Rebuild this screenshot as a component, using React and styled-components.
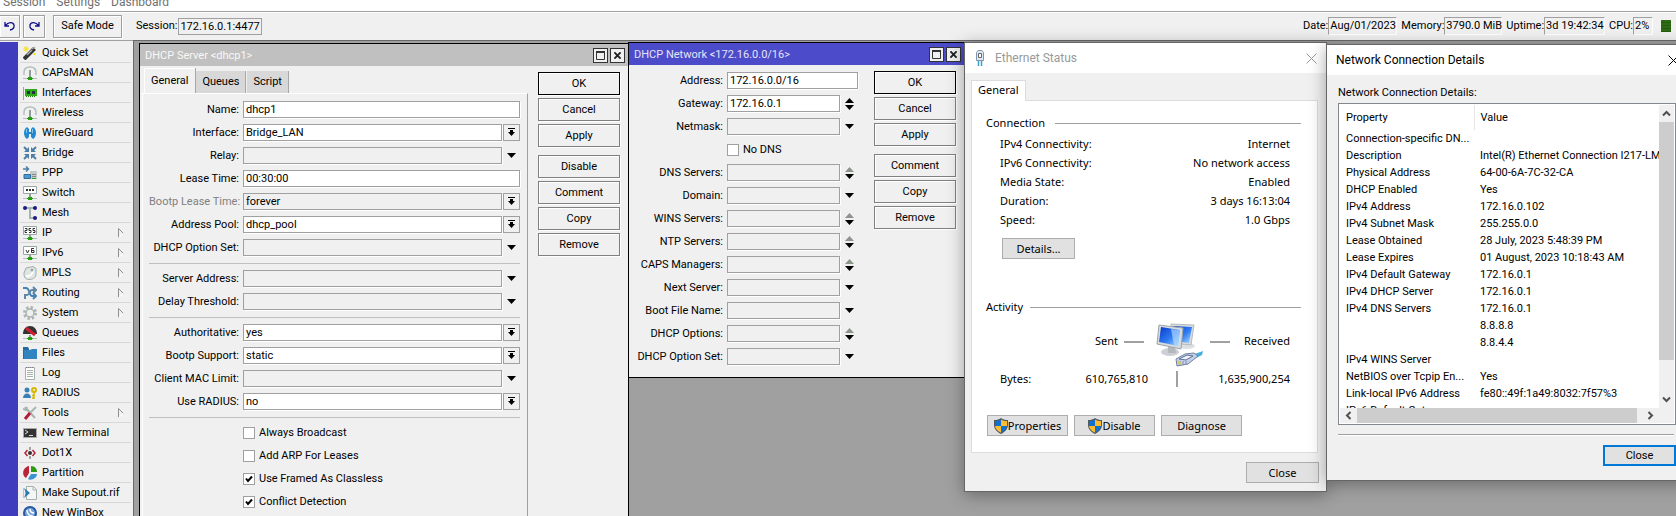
import React from 'react';
import styled, { createGlobalStyle, css } from 'styled-components';

const classic = "Roboto, 'Liberation Sans', sans-serif";
const system = "'Noto Sans', 'Open Sans', sans-serif";

const GlobalStyle = createGlobalStyle`
  * {
    box-sizing: border-box;
  }
  body {
    margin: 0;
    overflow: hidden;
  }
  button, input {
    font: inherit;
    color: inherit;
    margin: 0;
  }
`;

const Page = styled.div`
  position: relative;
  display: flex;
  flex-direction: column;
  height: 100vh;
  overflow: hidden;
  background: #f0f0f0;
  color: #000;
  font: 11px/16px ${classic};
`;

const MenuBar = styled.nav`
  display: flex;
  align-items: flex-end;
  gap: 11px;
  height: 11px;
  padding-left: 3px;
  overflow: hidden;
  background: #fff;
  font: 12px/18px ${classic};
`;

const MenuLink = styled.a`
  color: #707070;
  text-decoration: none;
`;

const Toolbar = styled.header`
  display: flex;
  align-items: center;
  height: 29px;
  flex-shrink: 0;
  border-top: 1px solid #a0a0a0;
  box-shadow: inset 0 1px #fff;
`;

const ToolButton = styled.button`
  display: flex;
  align-items: center;
  justify-content: center;
  width: ${(p) => (p.$wide ? '69px' : '22px')};
  height: 23px;
  margin-right: ${(p) => (p.$wide ? '14px' : '3px')};
  margin-left: ${(p) => (p.$wide ? '5px' : '0')};
  padding: 0;
  border: 1px solid #a0a0a0;
  background: #f0f0f0;
  box-shadow: 1px 1px #fff, inset 1px 1px #fff;

  &:first-child {
    width: 20px;
    border-left: 0;
  }
`;

const SessionField = styled.input`
  width: 84px;
  height: 17px;
  margin-left: 1px;
  padding: 0 1px;
  border: 1px solid #a0a0a0;
  background: #f0f0f0;
`;

const StatusList = styled.dl`
  display: flex;
  align-items: center;
  margin: 0 5px 0 auto;
`;

const StatusValue = styled.dd`
  margin: 0 4px 0 0;
  padding: 0 1px;
  width: ${(p) => p.$width}px;
  border: 1px solid #fff;
  border-top-color: #a0a0a0;
  border-left-color: #a0a0a0;
  white-space: nowrap;
`;

const CpuMeter = styled.span`
  width: 10px;
  height: 12px;
  margin-left: 4px;
  background: repeating-linear-gradient(#2f6b12 0 2px, #255a10 2px 3px);
`;

const Workspace = styled.div`
  display: flex;
  flex: 1;
  min-height: 0;
`;

const Sidebar = styled.aside`
  display: flex;
  width: 133px;
  flex-shrink: 0;
  border-top: 1px solid #a0a0a0;
  overflow: hidden;
`;

const Stripe = styled.div`
  width: 18px;
  margin-top: 1px;
  background: #403cbe;
`;

const SideMenu = styled.ul`
  flex: 1;
  margin: 2px 2px 0;
  padding: 0;
  list-style: none;
`;

const SideLink = styled.a`
  display: flex;
  align-items: center;
  gap: 5px;
  height: 20px;
  padding: 0 7px 0 3px;
  border-bottom: 1px solid #d8d8d8;
  color: inherit;
  text-decoration: none;

  span {
    flex: 1;
    white-space: nowrap;
  }
`;

const Desktop = styled.main`
  position: relative;
  flex: 1;
  overflow: hidden;
  border-top: 1px solid #696969;
  border-left: 1px solid #696969;
  background: #a0a0a0;
`;

const Window = styled.section`
  position: absolute;
  left: ${(p) => p.$x}px;
  top: ${(p) => p.$y}px;
  width: ${(p) => p.$width}px;
  min-height: ${(p) => p.$height || 0}px;
  border: 1px solid ${(p) => (p.$system ? '#666' : '#000')};
  background: #f0f0f0;
  ${(p) =>
    p.$system &&
    css`
      box-shadow: 0 3px 16px rgba(0, 0, 0, 0.35);
    `}
`;

const WindowTitle = styled.h2`
  flex: 1;
  margin: 0;
  font: inherit;
`;

const TitleBar = styled.div`
  display: flex;
  align-items: center;
  gap: 2px;
  height: 22px;
  padding: 0 3px 0 5px;
  background: ${(p) => (p.$active ? '#4c4cca' : '#c0c0c0')};
  color: ${(p) => (p.$active ? '#e4e4f8' : '#f8f8f8')};

  ${WindowTitle} {
    padding-top: 2px;
  }
`;

const TitleButton = styled.button`
  display: flex;
  align-items: center;
  justify-content: center;
  width: 15px;
  height: 15px;
  padding: 0;
  border: 1px solid #333;
  background: #f0f0f0;
`;

const WindowBody = styled.div`
  display: flex;
  align-items: flex-start;
  justify-content: space-between;
  padding: ${(p) => p.$padding};
`;

const TabbedForm = styled.div`
  width: 386px;
`;

const Tabs = styled.div`
  display: flex;
  align-items: flex-end;
  height: 25px;
  padding-left: 2px;
`;

const Tab = styled.button`
  height: ${(p) => (p.$selected ? 25 : 22)}px;
  padding: 0 ${(p) => (p.$selected ? 7 : 6)}px;
  margin-right: ${(p) => (p.$selected ? 0 : 1)}px;
  border: 0;
  border-right: 1px solid #a8a8a8;
  background: ${(p) => (p.$selected ? '#f0f0f0' : '#d8d8d8')};
  box-shadow: ${(p) => (p.$selected ? 'inset 1px 1px #fff' : 'none')};
`;

const Form = styled.form`
  display: flex;
  flex-direction: column;
  gap: 6px;
  width: ${(p) => (p.$width ? `${p.$width}px` : 'auto')};
  padding-top: 7px;
  ${(p) =>
    p.$panel &&
    css`
      min-height: 440px;
      padding: 7px 7px 0 6px;
      border-top: 1px solid #fff;
      border-left: 1px solid #fff;
      border-right: 1px solid #a0a0a0;
    `}
`;

const FieldRow = styled.div`
  display: flex;
  align-items: center;
  height: 17px;
`;

const FieldLabel = styled.label`
  width: ${(p) => p.$width}px;
  margin-right: 4px;
  text-align: right;
  white-space: nowrap;
  color: ${(p) => (p.$dim ? '#808080' : 'inherit')};
`;

const TextField = styled.input`
  flex: 1;
  min-width: 0;
  height: 17px;
  padding: 0 2px;
  border: 1px solid #a0a0a0;
  border-radius: 0;
  background: ${(p) => (p.$filled ? '#fff' : '#f0f0f0')};
  box-shadow: 1px 1px #fff;
`;

const FieldButton = styled.button`
  display: flex;
  align-items: center;
  justify-content: center;
  width: 17px;
  height: 17px;
  margin-left: 1px;
  padding: 0;
  border: ${(p) => (p.$framed ? '1px solid #a0a0a0' : '0')};
  background: none;
`;

const Separator = styled.hr`
  width: 100%;
  height: 2px;
  margin: 0;
  border: 0;
  border-bottom: 1px solid #c0c0c0;
`;

const CheckLabel = styled.label`
  display: flex;
  align-items: center;
  gap: 4px;
  height: 17px;
  margin-left: ${(p) => p.$indent}px;
`;

const Checkbox = styled.input`
  appearance: none;
  width: 12px;
  height: 12px;
  border: 1px solid #a0a0a0;
  background: #fff;

  &:checked {
    background: #fff
      url("data:image/svg+xml,%3Csvg xmlns='http://www.w3.org/2000/svg' viewBox='0 0 10 10'%3E%3Cpath d='M2 4.5 4 7 8 2.5' fill='none' stroke='%23000' stroke-width='2'/%3E%3C/svg%3E");
  }
`;

const Actions = styled.div`
  display: flex;
  flex-direction: column;
  gap: 3px;
  width: 82px;
  padding-top: ${(p) => p.$top}px;
`;

const ActionButton = styled.button`
  height: 23px;
  padding: 0;
  border: 1px solid ${(p) => (p.$primary ? '#000' : '#808080')};
  background: #f0f0f0;
  box-shadow: 1px 1px #fff, inset 1px 1px #fff;
  margin-top: ${(p) => (p.$group ? 5 : 0)}px;
`;

const SystemTitleBar = styled.div`
  display: flex;
  align-items: center;
  gap: 9px;
  height: 30px;
  padding: 0 9px;
  background: #fff;
  color: ${(p) => (p.$inactive ? '#999' : '#000')};
  font: 12px/16px ${classic};
`;

const CloseX = styled.button`
  display: flex;
  padding: 0;
  border: 0;
  background: none;
`;

const SystemBody = styled.div`
  display: flex;
  flex-direction: column;
  padding: 7px 7px 8px 6px;
  font: 11px/16px ${system};
`;

const SystemTab = styled.button`
  align-self: flex-start;
  position: relative;
  height: 21px;
  margin-bottom: -1px;
  padding: 0 6px 2px;
  border: 1px solid #dcdcdc;
  border-bottom: 0;
  background: #fff;
`;

const SystemPanel = styled.div`
  margin-right: 1px;
  padding: 14px 16px 16px 14px;
  border: 1px solid #dcdcdc;
  background: #fff;
`;

const GroupTitle = styled.h3`
  display: flex;
  align-items: center;
  gap: ${(p) => p.$gap}px;
  margin: 0;
  font: inherit;

  &::after {
    content: '';
    flex: 1;
    height: 1px;
    background: #a0a0a0;
  }
`;

const Stats = styled.dl`
  margin: 3px 11px 9px 14px;
`;

const Stat = styled.div`
  display: flex;
  justify-content: space-between;
  line-height: 19px;

  dd {
    margin: 0;
  }
`;

const SystemButton = styled.button`
  display: flex;
  align-items: center;
  justify-content: center;
  width: ${(p) => p.$width}px;
  height: 21px;
  padding: 0;
  border: ${(p) => (p.$focused ? '2px solid #0078d7' : '1px solid #adadad')};
  background: #e1e1e1;
`;

const DetailsSlot = styled.div`
  margin: 0 0 40px 16px;
`;

const Traffic = styled.div`
  display: grid;
  grid-template-columns: 132px 32px 60px 20px 1fr;
  justify-items: center;
  height: 46px;
  margin-top: 7px;
  line-height: 38px;
`;

const Sent = styled.span`
  justify-self: end;
`;

const Received = styled.span`
  justify-self: start;
  padding-left: 14px;
`;

const Dash = styled.span`
  width: 20px;
  height: 2px;
  margin-top: 19px;
  background: #a0a0a0;
`;

const Bytes = styled.div`
  display: grid;
  grid-template-columns: 50px 98px 58px 1fr;
  align-items: center;
  margin: 3px 0 28px;
  padding: 0 11px 0 14px;
  text-align: right;

  span:first-child {
    text-align: left;
  }
`;

const Divider = styled.i`
  justify-self: center;
  width: 2px;
  height: 16px;
  background: #a0a0a0;
`;

const ButtonRow = styled.div`
  display: flex;
  gap: 6px;
  justify-content: ${(p) => (p.$end ? 'flex-end' : 'flex-start')};
  margin-top: ${(p) => (p.$end ? '9px' : '0')};
  margin-left: 1px;
`;

const DetailsBody = styled.div`
  padding: 10px 12px 14px 11px;
`;

const ListBox = styled.div`
  display: grid;
  grid-template-columns: 1fr 15px;
  grid-template-rows: 303px 15px;
  margin-top: 2px;
  padding: 1px;
  border: 1px solid #828790;
  background: #fff;
`;

const ListView = styled.div`
  overflow: hidden;
`;

const Table = styled.table`
  width: 100%;
  table-layout: fixed;
  border-collapse: collapse;

  th, td {
    height: 17px;
    padding: 0 6px;
    font-weight: normal;
    line-height: 17px;
    text-align: left;
    white-space: nowrap;
  }
  thead th {
    height: 25px;
  }
  thead th:first-child {
    width: 134px;
    border-right: 1px solid #e5e5e5;
  }
  td {
    padding-right: 0;
  }
`;

const ScrollBar = styled.div`
  display: flex;
  flex-direction: ${(p) => (p.$vertical ? 'column' : 'row')};
  grid-row: ${(p) => (p.$vertical ? '1' : '2')};
  grid-column: ${(p) => (p.$vertical ? '2' : '1')};
  background: #f0f0f0;
`;

const ScrollThumb = styled.div`
  flex: ${(p) => p.$size};
  background: #cdcdcd;
`;

const ScrollTrack = styled.div`
  flex: ${(p) => p.$size};
`;

const ScrollButton = styled.button`
  display: flex;
  align-items: center;
  justify-content: center;
  width: 17px;
  height: 17px;
  max-width: 100%;
  max-height: 100%;
  padding: 0;
  border: 0;
  background: none;
`;

const Corner = styled.div`
  background: #f0f0f0;
`;

const Rule = styled.hr`
  height: 2px;
  margin: 9px 2px 9px 0;
  border: 0;
  border-top: 1px solid #a0a0a0;
  border-bottom: 1px solid #fff;
`;

const Svg = ({ size = 14, children, ...rest }) => (
  <svg width={size} height={size} viewBox={`0 0 ${size} ${size}`} fill="none" aria-hidden="true" {...rest}>
    {children}
  </svg>
);

const GreenPort = () => (
  <>
    <path d="M0 12.500h14" stroke="#b4c0be" />
    <path d="M4 12h6v1H4zM5 11h4v3H5z" fill="#22a010" />
  </>
);

const Antenna = () => (
  <Svg>
    <path d="M1 9V6.500C1 3 3.500 1 7 1s6 2 6 5.500V9" stroke="#b4c0be" strokeWidth="1.500" />
    <path d="M7 4v7" stroke="#8fa09c" strokeWidth="2" />
    <GreenPort />
  </Svg>
);

const icons = {
  'Quick Set': (
    <Svg>
      <path d="M1 13 11.500 2.500" stroke="#333" strokeWidth="4" />
      <path d="m9 3 3-2M4 9l5-5" stroke="#aaa" strokeWidth="1.500" />
      <path d="M3 0v6M0 3h6M1 1l4 4M5 1 1 5M10 8h3M11.500 7v2" stroke="#f2e21c" />
    </Svg>
  ),
  CAPsMAN: <Antenna />,
  Interfaces: (
    <Svg>
      <path d="M.5 1v13" stroke="#9aa8a4" />
      <path d="M2 3h12v7H2z" fill="#2faa18" />
      <path d="M4 5h3v3H4zM9 5h3v3H9z" fill="#234" />
      <path d="M3 10.500h10" stroke="#1c7a10" strokeDasharray="1 1" />
    </Svg>
  ),
  Wireless: <Antenna />,
  WireGuard: (
    <Svg>
      <path d="M4 1C0 3 0 11 4 13l2-2V8h2v3l2 2c4-2 4-10 0-12L8 3v3H6V3z" fill="#2488d0" />
      <path d="M3.500 3v4M9.500 3v4" stroke="#7cc8f4" />
    </Svg>
  ),
  Bridge: (
    <Svg>
      <path d="m1 1 4 4M13 1 9 5M1 13l4-4M13 13 9 9" stroke="#4d7fa6" strokeWidth="2" />
      <path d="M1 6h5V1zM13 6H8V1zM1 8h5v5zM13 8H8v5z" fill="#4d7fa6" />
    </Svg>
  ),
  PPP: (
    <Svg>
      <path d="M0 3h5M3 .5 5.500 3 3 5.500" stroke="#4d7fa6" strokeWidth="1.500" />
      <path d="M7 5h7v8H7z" fill="#c4cac8" />
      <path d="M1 8.500h6.500v4H1z" fill="#4a9ad8" stroke="#376c98" />
      <path d="M9 8.500h4M9 10.500h4" stroke="#888" />
      <path d="M9 12.500h4" stroke="#2a2" />
    </Svg>
  ),
  Switch: (
    <Svg>
      <path d="M.5.500h13v7H.5z" fill="#fff" stroke="#9aa8a4" />
      <path d="M3 4h2M6 4h2M9 4h2" stroke="#333" strokeWidth="2" />
      <path d="M7 8v3" stroke="#8fa09c" strokeWidth="2" />
      <GreenPort />
    </Svg>
  ),
  Mesh: (
    <Svg>
      <path d="M2 2h10M7 2v10h5" stroke="#a4b4b0" strokeWidth="2" />
      <circle cx="2" cy="2" r="2" fill="#1a1a80" />
      <circle cx="12" cy="2" r="2" fill="#1a1a80" />
      <circle cx="12" cy="12" r="2" fill="#1a1a80" />
    </Svg>
  ),
  IP: (
    <Svg>
      <path d="M.5.500h13v8H.5z" fill="#fff" stroke="#9aa8a4" />
      <path d="M2 2.500h2v2H2v2h2M8 2.500H6v2h2v2H6M12 2.500h-2v2h2v2h-2" stroke="#333" />
      <path d="M7 9v2" stroke="#8fa09c" strokeWidth="2" />
      <GreenPort />
    </Svg>
  ),
  IPv6: (
    <Svg>
      <path d="M.5.500h13v8H.5z" fill="#fff" stroke="#9aa8a4" />
      <path d="m3 4 1.500 3L6 4M11 2.500H8.500v4H11v-2H9" stroke="#333" />
      <path d="M7 9v2" stroke="#8fa09c" strokeWidth="2" />
      <GreenPort />
    </Svg>
  ),
  MPLS: (
    <Svg>
      <path d="M3 2 10 .5l3 2V8c0 3-2 5-6 5.500C3 14 .5 11 1 7z" fill="#dfe5e3" stroke="#a0aeaa" />
      <path d="M3 10c4 1 7-2 7-6" stroke="#fff" strokeWidth="2" />
      <circle cx="9" cy="4" r="1.500" fill="#9aa8a4" />
    </Svg>
  ),
  Routing: (
    <Svg>
      <path d="M0 2h3c4 0 3 8 6 8h3M10 7l3 3-3 3" stroke="#4583b4" strokeWidth="2" />
      <path d="M2 13V9h2c3 0 2-5 5-5h3M10 1l3 3-3 3" stroke="#5f86a3" strokeWidth="2" />
    </Svg>
  ),
  System: (
    <Svg>
      <circle cx="7" cy="7" r="5.500" stroke="#a8b4b0" strokeWidth="3" strokeDasharray="2.300 2" />
      <circle cx="7" cy="7" r="4" fill="#edf0ef" stroke="#a8b4b0" strokeWidth="1.500" />
    </Svg>
  ),
  Queues: (
    <Svg>
      <path d="M0 8C0 3 3 0 7 0s7 3 7 8z" fill="#333" />
      <path d="m3 2 9 7" stroke="#d02030" strokeWidth="3" />
      <path d="M7 9v2" stroke="#8fa09c" strokeWidth="2" />
      <GreenPort />
    </Svg>
  ),
  Files: (
    <Svg>
      <path d="M0 1h5l1 2v10H0z" fill="#246a9c" />
      <path d="M1 4h6l2-1h5v10H1z" fill="#3284c0" />
    </Svg>
  ),
  Log: (
    <Svg>
      <path d="M2.500 1.500h9v12h-9z" fill="#fff" stroke="#a4b0ac" />
      <path d="M3 1.500h8" stroke="#778" strokeDasharray="1 1" />
      <path d="M4 4.500h6M4 6.500h6M4 8.500h6M4 10.500h6" stroke="#a4b0ac" />
    </Svg>
  ),
  RADIUS: (
    <Svg>
      <circle cx="4" cy="4" r="2.500" fill="#3a7fb8" />
      <path d="M0 12c0-6 8-6 8 0z" fill="#3a7fb8" />
      <circle cx="11" cy="4" r="2" stroke="#d2b800" strokeWidth="2" />
      <path d="M11 6v7M11 9.500h-2M11 12h-2" stroke="#d2b800" strokeWidth="1.500" />
    </Svg>
  ),
  Tools: (
    <Svg>
      <path d="m2 1 10 11M0 3l3 1 1-3" stroke="#a8b4b0" strokeWidth="2" />
      <path d="m13 1-6 6" stroke="#a8b4b0" strokeWidth="2" />
      <path d="m7 7-5 6" stroke="#b01c34" strokeWidth="3" />
    </Svg>
  ),
  'New Terminal': (
    <Svg>
      <path d="M.5 2.500h13v9H.5z" fill="#333" stroke="#aaa" />
      <path d="m2 4 3 2-3 2M6 9.500h4" stroke="#ddd" />
    </Svg>
  ),
  Dot1X: (
    <Svg>
      <path d="M4.500 4 2 7l2.500 3M9.500 4 12 7l-2.500 3" stroke="#b82438" strokeWidth="1.500" />
      <path d="M7 1v3M7 10v3" stroke="#888" strokeWidth="1.500" />
      <circle cx="7" cy="7" r="2" fill="#333" />
    </Svg>
  ),
  Partition: (
    <Svg>
      <path d="M6 0C0 1-2 9 3 12l3-5z" fill="#b82438" />
      <path d="M8 0c4 0 6 3 6 6H8z" fill="#2c9a14" />
      <path d="m8 8 6 0c0 4-6 7-9 5z" fill="#3a94d4" />
    </Svg>
  ),
  'Make Supout.rif': (
    <Svg>
      <path d="M3.500.500h7l3 3v10h-10z" fill="#f4f6f6" stroke="#a4b0ac" />
      <path d="M10 1v3h3" stroke="#a4b0ac" />
      <path d="M1 2c2 5 2 5 0 10l6-5z" fill="#2478b4" />
      <path d="M0 2v10" stroke="#5aa0d4" />
    </Svg>
  ),
  'New WinBox': (
    <Svg>
      <circle cx="7" cy="7" r="6" fill="#78a4dc" stroke="#2858a0" strokeWidth="2" />
      <path d="M4 4c0 4 3 6 6 6M7 3c0 3 1 4 4 4" stroke="#fff" strokeWidth="1.500" />
    </Svg>
  ),
};

const submenus = ['IP', 'IPv6', 'MPLS', 'Routing', 'System', 'Tools'];

const status = [
  ['Date:', 'Aug/01/2023', 69],
  ['Memory:', '3790.0 MiB', 58],
  ['Uptime:', '3d 19:42:34', 61],
  ['CPU:', '2%', 20],
];

const serverFields = [
  { label: 'Name', value: 'dhcp1', filled: true },
  { label: 'Interface', value: 'Bridge_LAN', filled: true, control: 'select' },
  { label: 'Relay', control: 'down' },
  { label: 'Lease Time', value: '00:30:00', filled: true },
  { label: 'Bootp Lease Time', value: 'forever', dim: true, control: 'select' },
  { label: 'Address Pool', value: 'dhcp_pool', filled: true, control: 'select' },
  { label: 'DHCP Option Set', control: 'down' },
  { separator: true },
  { label: 'Server Address', control: 'down' },
  { label: 'Delay Threshold', control: 'down' },
  { separator: true },
  { label: 'Authoritative', value: 'yes', filled: true, control: 'select' },
  { label: 'Bootp Support', value: 'static', filled: true, control: 'select' },
  { label: 'Client MAC Limit', control: 'down' },
  { label: 'Use RADIUS', value: 'no', filled: true, control: 'select' },
  { separator: true },
  { check: 'Always Broadcast' },
  { check: 'Add ARP For Leases' },
  { check: 'Use Framed As Classless', checked: true },
  { check: 'Conflict Detection', checked: true },
];

const networkFields = [
  { label: 'Address', value: '172.16.0.0/16', filled: true },
  { label: 'Gateway', value: '172.16.0.1', filled: true, control: 'updown' },
  { label: 'Netmask', control: 'down' },
  { check: 'No DNS' },
  { label: 'DNS Servers', control: 'add' },
  { label: 'Domain', control: 'down' },
  { label: 'WINS Servers', control: 'add' },
  { label: 'NTP Servers', control: 'add' },
  { label: 'CAPS Managers', control: 'add' },
  { label: 'Next Server', control: 'down' },
  { label: 'Boot File Name', control: 'down' },
  { label: 'DHCP Options', control: 'add' },
  { label: 'DHCP Option Set', control: 'down' },
];

const connection = [
  ['IPv4 Connectivity:', 'Internet'],
  ['IPv6 Connectivity:', 'No network access'],
  ['Media State:', 'Enabled'],
  ['Duration:', '3 days 16:13:04'],
  ['Speed:', '1.0 Gbps'],
];

const details = [
  ['Connection-specific DN...', ''],
  ['Description', 'Intel(R) Ethernet Connection I217-LM'],
  ['Physical Address', '64-00-6A-7C-32-CA'],
  ['DHCP Enabled', 'Yes'],
  ['IPv4 Address', '172.16.0.102'],
  ['IPv4 Subnet Mask', '255.255.0.0'],
  ['Lease Obtained', '28 July, 2023 5:48:39 PM'],
  ['Lease Expires', '01 August, 2023 10:18:43 AM'],
  ['IPv4 Default Gateway', '172.16.0.1'],
  ['IPv4 DHCP Server', '172.16.0.1'],
  ['IPv4 DNS Servers', '172.16.0.1'],
  ['', '8.8.8.8'],
  ['', '8.8.4.4'],
  ['IPv4 WINS Server', ''],
  ['NetBIOS over Tcpip En...', 'Yes'],
  ['Link-local IPv6 Address', 'fe80::49f:1a49:8032:7f57%3'],
  ['IPv6 Default Gateway', ''],
];

const ControlIcon = ({ type }) => {
  if (type === 'updown' || type === 'add') {
    return (
      <svg width="9" height="12" viewBox="0 0 9 12" aria-hidden="true">
        <path d="M0 5h9L4.500 0z" fill={type === 'add' ? '#8c948c' : '#000'} />
        <path d="M0 7h9L4.500 12z" fill="#000" />
      </svg>
    );
  }
  if (type === 'select') {
    return (
      <svg width="9" height="9" viewBox="0 0 9 9" aria-hidden="true">
        <path d="M1 0h7v1H1zM3 2h3v2h2L4.500 8 1 4h2z" fill="#000" />
      </svg>
    );
  }
  return (
    <Svg size={9}>
      <path d="M0 2h9L4.500 7z" fill="#000" />
    </Svg>
  );
};

const Cross = ({ size = 11, color = '#000', width = 1 }) => (
  <svg width={size} height={size} viewBox="0 0 11 11" aria-hidden="true">
    <path d="m.5.500 10 10M10.500.500l-10 10" stroke={color} strokeWidth={width} />
  </svg>
);

const Shield = () => (
  <svg width="14" height="16" viewBox="0 0 14 16" aria-hidden="true">
    <path d="M7 0c2 1.500 4 2 7 2v5c0 4-3 7-7 9-4-2-7-5-7-9V2c3 0 5-.5 7-2z" fill="#505860" />
    <path d="M7 1.500V8H1V3c2.500 0 4-.5 6-1.500zM7 8h6c-.5 3-3 5.500-6 6.800z" fill="#1070d0" />
    <path d="M7 1.500V8h6V3c-2.500 0-4-.5-6-1.500zM7 8H1c.5 3 3 5.500 6 6.800z" fill="#fcbc30" />
  </svg>
);

const Computers = () => (
  <svg width="48" height="46" viewBox="0 0 48 46" aria-hidden="true">
    <defs>
      <linearGradient id="screen" x1="0" y1="0" x2="1" y2="1">
        <stop offset="0" stopColor="#0a38c8" />
        <stop offset=".55" stopColor="#2f7cf4" />
        <stop offset="1" stopColor="#a8dcff" />
      </linearGradient>
    </defs>
    <ellipse cx="14" cy="30" rx="9" ry="4" fill="#ccd0d4" />
    <ellipse cx="31" cy="24" rx="8" ry="3" fill="#dde0e2" />
    <path d="m15 2 23 1-3 20-18-2z" fill="#d8dcde" stroke="#b4babe" />
    <path d="m17 4 19 1-3 16-14-2z" fill="url(#screen)" />
    <path d="m12 24 7 1 1 6h-8z" fill="#b4b8bc" />
    <path d="m3 3 24 3-2 21L1 22z" fill="#d8dcde" stroke="#9ca4aa" />
    <path d="m5 5 19 3-2 16L3 20z" fill="url(#screen)" />
    <path d="m15 7 9 1-2 16-4-1z" fill="#b4dcff" opacity=".65" />
    <path d="m36 33 11-4-1 4-8 4z" fill="#42b0dc" />
    <path d="m20 37 9-5 9-1 4 3-10 8-11 2z" fill="#c4d0ea" stroke="#7080a0" />
    <path d="m23 37 8-4 6 1-7 4z" stroke="#5c7094" fill="#edf1fa" />
    <path d="M24 39v4M27 39v4M30 39v3" stroke="#8090b0" />
    <path d="m21 38 1 4 3 1v-3z" fill="#d0c878" />
  </svg>
);

const Fields = ({ prefix, fields, labelWidth }) =>
  fields.map((field, index) => {
    if (field.separator) return <Separator key={index} />;
    if (field.check) {
      return (
        <CheckLabel key={field.check} $indent={labelWidth + 4}>
          <Checkbox type="checkbox" defaultChecked={field.checked} />
          {field.check}
        </CheckLabel>
      );
    }
    const id = `${prefix}-${index}`;
    return (
      <FieldRow key={id}>
        <FieldLabel htmlFor={id} $width={labelWidth} $dim={field.dim}>
          {field.label}:
        </FieldLabel>
        <TextField id={id} defaultValue={field.value} $filled={field.filled} />
        {field.control && (
          <FieldButton type="button" $framed={field.control === 'select'} aria-label={`${field.label} options`}>
            <ControlIcon type={field.control} />
          </FieldButton>
        )}
      </FieldRow>
    );
  });

const WindowHeader = ({ title, active }) => (
  <TitleBar $active={active}>
    <WindowTitle>{title}</WindowTitle>
    <TitleButton aria-label="Maximize">
      <Svg size={9}>
        <path d="M.5 1h8v7.500h-8z" stroke="#333" />
        <path d="M0 1h9" stroke="#333" strokeWidth="2" />
      </Svg>
    </TitleButton>
    <TitleButton aria-label="Close">
      <Cross size={7} color="#222" width={3} />
    </TitleButton>
  </TitleBar>
);

const ActionList = ({ names, groupStart, top }) => (
  <Actions $top={top}>
    {names.map((name) => (
      <ActionButton key={name} $primary={name === 'OK'} $group={name === groupStart}>
        {name}
      </ActionButton>
    ))}
  </Actions>
);

const Chevron = ({ turn = 0 }) => (
  <Svg size={9}>
    <path d="M1 6.500 4.500 3 8 6.500" stroke="#505050" strokeWidth="2" transform={`rotate(${turn} 4.500 4.500)`} />
  </Svg>
);

const App = () => (
  <Page>
    <GlobalStyle />
    <MenuBar>
      {['Session', 'Settings', 'Dashboard'].map((item) => (
        <MenuLink key={item} href="#">
          {item}
        </MenuLink>
      ))}
    </MenuBar>
    <Toolbar>
      <ToolButton aria-label="Undo">
        <Svg size={12}>
          <path d="M1 2v4h4M1.500 5.500C4 2 9 1.500 10 5c.6 2.500-1 4.500-4 5" stroke="#10108c" strokeWidth="1.300" />
        </Svg>
      </ToolButton>
      <ToolButton aria-label="Redo">
        <Svg size={12}>
          <path d="M11 2v4H7M10.500 5.500C8 2 3 1.500 2 5c-.6 2.500 1 4.500 4 5" stroke="#10108c" strokeWidth="1.300" />
        </Svg>
      </ToolButton>
      <ToolButton $wide>Safe Mode</ToolButton>
      <label htmlFor="session">Session:</label>
      <SessionField id="session" defaultValue="172.16.0.1:4477" readOnly />
      <StatusList>
        {status.map(([name, value, width]) => (
          <React.Fragment key={name}>
            <dt>{name}</dt>
            <StatusValue $width={width}>{value}</StatusValue>
          </React.Fragment>
        ))}
        <CpuMeter />
      </StatusList>
    </Toolbar>
    <Workspace>
      <Sidebar>
        <Stripe />
        <SideMenu>
          {Object.entries(icons).map(([name, icon]) => (
            <li key={name}>
              <SideLink href="#">
                {icon}
                <span>{name}</span>
                {submenus.includes(name) && (
                  <svg width="6" height="10" viewBox="0 0 6 10" aria-hidden="true">
                    <path d="M.5 9.500v-9l5 5" fill="none" stroke="#909090" />
                    <path d="M5.500 5.500.5 9.500" stroke="#fff" />
                  </svg>
                )}
              </SideLink>
            </li>
          ))}
        </SideMenu>
      </Sidebar>
      <Desktop>
        <Window $x={5} $y={2} $width={490} $height={500}>
          <WindowHeader title="DHCP Server <dhcp1>" />
          <WindowBody $padding="2px 8px 0 2px">
            <TabbedForm>
              <Tabs>
                <Tab $selected>General</Tab>
                <Tab>Queues</Tab>
                <Tab>Script</Tab>
              </Tabs>
              <Form $panel>
                <Fields prefix="server" fields={serverFields} labelWidth={90} />
              </Form>
            </TabbedForm>
            <ActionList
              names={['OK', 'Cancel', 'Apply', 'Disable', 'Comment', 'Copy', 'Remove']}
              groupStart="Disable"
              top={4}
            />
          </WindowBody>
        </Window>
        <Window $x={494} $y={1} $width={337}>
          <WindowHeader title="DHCP Network <172.16.0.0/16>" active />
          <WindowBody $padding="0 8px 12px 5px">
            <Form $width={224}>
              <Fields prefix="network" fields={networkFields} labelWidth={89} />
            </Form>
            <ActionList names={['OK', 'Cancel', 'Apply', 'Comment', 'Copy', 'Remove']} groupStart="Comment" top={6} />
          </WindowBody>
        </Window>
      </Desktop>
    </Workspace>

    <Window $system $x={964} $y={42} $width={363}>
      <SystemTitleBar $inactive>
        <svg width="12" height="18" viewBox="0 0 12 18" aria-hidden="true">
          <path d="M2.500 3.500 4 1.500h4l1.500 2v8h-7z" fill="#dfe8ee" stroke="#8296a8" />
          <path d="M4.500 4.500h3v4h-3z" fill="#fff" stroke="#667" />
          <path d="M4.500 12v5M7.500 12v5" stroke="#3aa0d0" strokeWidth="1.500" />
        </svg>
        <WindowTitle>Ethernet Status</WindowTitle>
        <CloseX aria-label="Close">
          <Cross color="#999" />
        </CloseX>
      </SystemTitleBar>
      <SystemBody>
        <SystemTab>General</SystemTab>
        <SystemPanel>
          <GroupTitle $gap={10}>Connection</GroupTitle>
          <Stats>
            {connection.map(([name, value]) => (
              <Stat key={name}>
                <dt>{name}</dt>
                <dd>{value}</dd>
              </Stat>
            ))}
          </Stats>
          <DetailsSlot>
            <SystemButton $width={73}>Details...</SystemButton>
          </DetailsSlot>
          <GroupTitle $gap={7}>Activity</GroupTitle>
          <Traffic>
            <Sent>Sent</Sent>
            <Dash />
            <Computers />
            <Dash />
            <Received>Received</Received>
          </Traffic>
          <Bytes>
            <span>Bytes:</span>
            <span>610,765,810</span>
            <Divider />
            <span>1,635,900,254</span>
          </Bytes>
          <ButtonRow>
            <SystemButton $width={81}>
              <Shield />
              Properties
            </SystemButton>
            <SystemButton $width={81}>
              <Shield />
              Disable
            </SystemButton>
            <SystemButton $width={81}>Diagnose</SystemButton>
          </ButtonRow>
        </SystemPanel>
        <ButtonRow $end>
          <SystemButton $width={73}>Close</SystemButton>
        </ButtonRow>
      </SystemBody>
    </Window>

    <Window $system $x={1326} $y={44} $width={363}>
      <SystemTitleBar>
        <WindowTitle>Network Connection Details</WindowTitle>
        <CloseX aria-label="Close">
          <Cross />
        </CloseX>
      </SystemTitleBar>
      <DetailsBody>
        Network Connection Details:
        <ListBox>
          <ListView>
            <Table>
              <thead>
                <tr>
                  <th>Property</th>
                  <th>Value</th>
                </tr>
              </thead>
              <tbody>
                {details.map(([property, value], index) => (
                  <tr key={index}>
                    <td>{property}</td>
                    <td>{value}</td>
                  </tr>
                ))}
              </tbody>
            </Table>
          </ListView>
          <ScrollBar $vertical>
            <ScrollButton aria-label="Scroll up">
              <Chevron />
            </ScrollButton>
            <ScrollThumb $size={237} />
            <ScrollTrack $size={31} />
            <ScrollButton aria-label="Scroll down">
              <Chevron turn={180} />
            </ScrollButton>
          </ScrollBar>
          <ScrollBar>
            <ScrollButton aria-label="Scroll left">
              <Chevron turn={-90} />
            </ScrollButton>
            <ScrollThumb $size={280} />
            <ScrollTrack $size={5} />
            <ScrollButton aria-label="Scroll right">
              <Chevron turn={90} />
            </ScrollButton>
          </ScrollBar>
          <Corner />
        </ListBox>
        <Rule />
        <ButtonRow $end>
          <SystemButton $width={73} $focused>
            Close
          </SystemButton>
        </ButtonRow>
      </DetailsBody>
    </Window>
  </Page>
);

export default App;
